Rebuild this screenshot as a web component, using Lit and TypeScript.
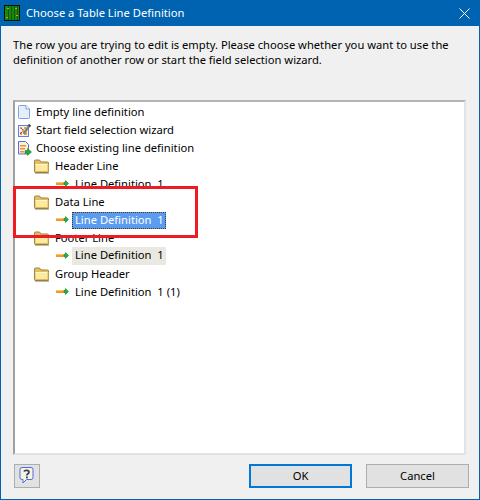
import { LitElement, html, css, svg } from "lit";
import { customElement } from "lit/decorators.js";

const page = svg`<svg class="ic" width="16" height="16" viewBox="0 0 16 16"><path d="M3.500 1.500h6.500l3.500 3.500v8.500a1 1 0 0 1-1 1h-9a1 1 0 0 1-1-1v-11a1 1 0 0 1 1-1z" fill="#e6eefc" stroke="#7f9ee8"/><path d="M10 1.500v3.500h3.500" fill="#fff" stroke="#7f9ee8"/></svg>`;
const wizard = svg`<svg class="ic" width="16" height="16" viewBox="0 0 16 16"><rect x="2.500" y="3.500" width="10" height="11" fill="#eef3fd" stroke="#5c7fe0"/><path d="M4 5h2v2H4zM8 5h2v2H8zM6 7h2v3H6zM4 10h2v3H4zM8 10h3v3H8z" fill="#f0a040"/><path d="M5 6l2 2M4 12l2-2" stroke="#d04020"/><path d="M6.500 11L13 2l2 1.500-6.500 9z" fill="#808080"/><path d="M13 2l2 1.500-1 1.500-2-1.500z" fill="#444"/></svg>`;
const chooser = svg`<svg class="ic" width="16" height="16" viewBox="0 0 16 16"><path d="M2.500 1.500h7l3 3v9.500h-10z" fill="#f6f0e0" stroke="#5c6fd0"/><path d="M4 5h6v1.500H4zM4 8h5v1.500H4zM4 11h4v1.500H4z" fill="#f09030"/><path d="M9 10.500h2.500V8.500l4 3.500-4 3.500v-2H9z" fill="#22a838" stroke="#157a25" stroke-width=".5"/></svg>`;
const folder = svg`<svg class="ic" width="16" height="16" viewBox="0 0 16 16"><path d="M.5 3a1 1 0 0 1 1-1h4l1.500 2h6.500a1 1 0 0 1 1 1v8.500a1 1 0 0 1-1 1h-12a1 1 0 0 1-1-1z" fill="#e2bd62" stroke="#a2843f"/><path d="M1.500 6h12.500v7.500H1.500z" fill="#fcea9f"/><path d="M1.500 6.500h12.500" stroke="#fff6cf"/><path d="M14 6v7.500" stroke="#e0b95c"/><path d="M1.500 13.500h12.500" stroke="#e0b95c"/><path d="M1 15h14" stroke="#8a7850"/></svg>`;
const arrow = svg`<svg class="ic" width="16" height="16" viewBox="0 0 16 16"><path d="M2 6h8.500v3H2z" fill="#f59a23"/><path d="M2 6.500h8" stroke="#fdc26a"/><path d="M10 6.300h1.500V4.500l3 3-3 3V8.700H10z" fill="#1fb53a" stroke="#157a25" stroke-width=".6"/></svg>`;
const help = svg`<svg width="18" height="20" viewBox="0 0 18 20"><path d="M4 1.500h9a2 2 0 0 1 2 2v8a2 2 0 0 1-2 2H8.500l-3.500 3.500v-3.500H4a2 2 0 0 1-2-2v-8a2 2 0 0 1 2-2z" fill="#f8f6d8" stroke="#4a6cf0"/><path d="M6 5.500c.5-1.500 5-1.700 5 .7 0 1.600-2.200 1.600-2.200 3.300" fill="none" stroke="#3a3a80" stroke-width="1.700"/><rect x="8" y="10.500" width="1.800" height="1.800" fill="#3a3a80"/></svg>`;
const appIcon = svg`<svg width="16" height="16" viewBox="0 0 16 16"><rect width="16" height="16" fill="#0b0b0b"/><rect x="1" y="1" width="14" height="14" fill="#128c0e"/><path d="M4.500 1v14M7.500 1v14M10.500 1v14M13.500 1v14" stroke="#0a5a08"/><rect x="6" y="7" width="3" height="1" fill="#c02020"/><rect x="3" y="3" width="2" height="1" fill="#c8a030"/><rect x="11" y="3" width="2" height="1" fill="#c8a030"/><rect x="2" y="12" width="2" height="1" fill="#c8a030"/><rect x="12" y="10" width="2" height="1" fill="#c8a030"/></svg>`;

@customElement("app-root")
export class AppRoot extends LitElement {
  static styles = css`
    :host { display: block; width: 480px; height: 500px; font-family: "Noto Sans", sans-serif; font-size: 11.200px; color: #000; }
    .dialog { position: relative; box-sizing: border-box; width: 480px; height: 500px; display: flex; flex-direction: column; background: #f0f0f0; border: 1px solid #0063b1; border-top: 0; }
    .title { height: 26px; flex: none; display: flex; align-items: center; gap: 6px; background: #0063b1; color: #fff; padding-left: 3px; }
    .title span { padding-bottom: 2px; }
    .close { margin-left: auto; width: 30px; height: 26px; display: flex; align-items: center; justify-content: center; }
    .msg { margin: 11px 12px 0; flex: none; white-space: nowrap; }
    .msg div { height: 15px; line-height: 15px; }
    .tree { flex: 1; margin: 33px 13px 0 12px; background: #fff; border: 2px solid #a0a0a0; border-right-color: #e3e3e3; border-bottom-color: #e3e3e3; border-top-color: #b4b4b4; padding-top: 1px; display: flex; flex-direction: column; min-height: 0; }
    .row { height: 18px; display: flex; align-items: center; gap: 4px; white-space: nowrap; }
    .l0 { padding-left: 1px; }
    .l1 { padding-left: 19px; gap: 5px; }
    .l2 { padding-left: 39px; gap: 2px; }
    .ic { flex: none; display: block; }
    .txt { line-height: 15px; height: 17px; }
    .l2 .txt { padding: 0 2px 0 3px; }
    .sel { background: #5b9cf0; color: #fff; outline: 1px dotted #4a3a10; outline-offset: -1px; }
    .hov { background: #e9e9e1; height: 18px; line-height: 16px; }
    .footer { height: 44px; flex: none; display: flex; align-items: flex-start; padding: 9px 10px 0 13px; box-sizing: border-box; }
    .btn { box-sizing: border-box; height: 24px; padding-bottom: 1px; background: #e1e1e1; border: 1px solid #adadad; display: flex; align-items: center; justify-content: center; }
    .helpb { width: 26px; padding-bottom: 0; }
    .ok { width: 103px; margin-left: auto; border: 2px solid #0078d7; }
    .cancel { width: 103px; margin-left: 14px; }
    .mark { position: absolute; left: 12px; top: 186px; width: 185px; height: 52px; box-sizing: border-box; border: 3px solid #ed1c24; pointer-events: none; }
  `;

  render() {
    return html`<div class="dialog">
      <div class="title">${appIcon}<span>Choose a Table Line Definition</span>
        <div class="close"><svg width="11" height="11" viewBox="0 0 11 11"><path d="M.5.500l10 10M10.500.500l-10 10" stroke="#fff" fill="none"/></svg></div>
      </div>
      <div class="msg"><div>The row you are trying to edit is empty. Please choose whether you want to use the</div><div>definition of another row or start the field selection wizard.</div></div>
      <div class="tree">
        <div class="row l0">${page}<span class="txt">Empty line definition</span></div>
        <div class="row l0">${wizard}<span class="txt">Start field selection wizard</span></div>
        <div class="row l0">${chooser}<span class="txt">Choose existing line definition</span></div>
        <div class="row l1">${folder}<span class="txt">Header Line</span></div>
        <div class="row l2">${arrow}<span class="txt">Line Definition&nbsp; 1</span></div>
        <div class="row l1">${folder}<span class="txt">Data Line</span></div>
        <div class="row l2">${arrow}<span class="txt sel">Line Definition&nbsp; 1</span></div>
        <div class="row l1">${folder}<span class="txt">Footer Line</span></div>
        <div class="row l2">${arrow}<span class="txt hov">Line Definition&nbsp; 1</span></div>
        <div class="row l1">${folder}<span class="txt">Group Header</span></div>
        <div class="row l2">${arrow}<span class="txt">Line Definition&nbsp; 1 (1)</span></div>
      </div>
      <div class="footer">
        <div class="btn helpb">${help}</div>
        <div class="btn ok">OK</div>
        <div class="btn cancel">Cancel</div>
      </div>
      <div class="mark"></div>
    </div>`;
  }
}
